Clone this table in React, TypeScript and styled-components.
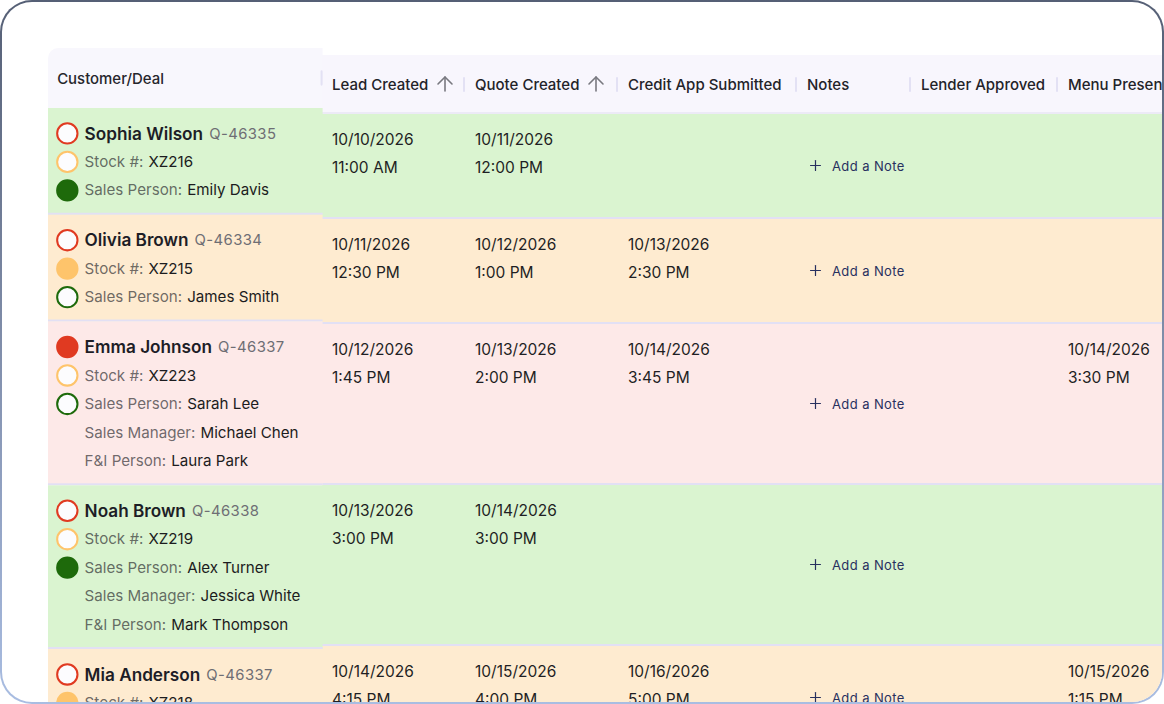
import React from 'react';
import styled, { createGlobalStyle } from 'styled-components';
import { ArrowUp, Plus } from 'lucide-react';

const GlobalStyle = createGlobalStyle`
    html, body {
        margin: 0;
        padding: 0;
        background: #ffffff;
    }
    body {
        font-family: Inter, "Noto Sans", sans-serif;
        -webkit-font-smoothing: antialiased;
    }
`

type Tone = 'green' | 'orange' | 'pink';

const toneBg: Record<Tone, string> = {
    green: '#daf4d0',
    orange: '#feebd0',
    pink: '#fde9e8',
}

const Frame = styled.div`
    box-sizing: border-box;
    width: 1164px;
    height: 704px;
    border: 2px solid transparent;
    border-radius: 32px;
    background:
        linear-gradient(#ffffff, #ffffff) padding-box,
        linear-gradient(180deg, #555f75 0%, #7d8aa6 45%, #a9bde2 100%) border-box;
    overflow: hidden;
    padding: 53px 0 0 46px;
`

const Table = styled.div`
    display: flex;
    align-items: flex-start;
`

const StickyPane = styled.div`
    flex: 0 0 270px;
    margin-right: 4px;
    display: flex;
    flex-direction: column;
    transform: scale(1.017);
    transform-origin: left 412px;
`

const ScrollPane = styled.div`
    flex: 0 0 auto;
    display: flex;
    flex-direction: column;
`

const Divider = styled.span`
    flex: 0 0 2px;
    width: 2px;
    height: 15px;
    margin-left: auto;
    background: #e3e1f4;
    border-radius: 1px;
`

const StickyHead = styled.div`
    box-sizing: border-box;
    height: 59px;
    background: #f8f7fd;
    border-top-left-radius: 10px;
    display: flex;
    align-items: center;
    padding-left: 9px;
    font-size: 14.7px;
    color: #26262c;
    font-weight: 500;
`

const HeadRow = styled.div`
    box-sizing: border-box;
    height: 59px;
    display: flex;
    background: #f8f6fd;
    border-bottom: 2px solid #eceaf6;
    padding-top: 1px;
`

const HeadCell = styled.div<{ $w: number }>`
    box-sizing: border-box;
    width: ${p => p.$w}px;
    flex: 0 0 auto;
    display: flex;
    align-items: center;
    padding-left: 10px;
    font-size: 15px;
    font-weight: 500;
    color: #232329;
    white-space: nowrap;

    & > svg {
        color: #78787f;
        flex: 0 0 auto;
        margin-left: 5px;
    }
`

const Row = styled.div<{ $tone: Tone; $h: number }>`
    box-sizing: border-box;
    height: ${p => p.$h}px;
    background: ${p => toneBg[p.$tone]};
    border-bottom: 2px solid #e2e0f4;
    display: flex;
`

const DealCell = styled.div`
    display: flex;
    flex-direction: column;
    padding: 11px 0 0 8px;
`

const Line = styled.div`
    height: 28px;
    display: flex;
    align-items: center;
    gap: 6px;
    font-size: 14.9px;
    white-space: nowrap;
`

const Dot = styled.span<{ $color: string; $filled?: boolean }>`
    box-sizing: border-box;
    width: 22px;
    height: 22px;
    border-radius: 50%;
    border: 2px solid ${p => p.$color};
    background: ${p => (p.$filled ? p.$color : '#fcfcfe')};
    flex: 0 0 auto;
`

const Spacer = styled.span`
    width: 22px;
    flex: 0 0 auto;
`

const Name = styled.span`
    font-size: 16.9px;
    font-weight: 600;
    color: #1d1d26;
`

const Code = styled.span`
    font-size: 14.6px;
    color: #6e6e74;
    letter-spacing: 0.4px;
`

const Label = styled.span`
    color: rgba(40, 40, 44, 0.68);
    margin-right: 5px;
`

const Value = styled.span`
    color: #1c1c20;
`

const DataCell = styled.div<{ $w: number }>`
    box-sizing: border-box;
    width: ${p => p.$w}px;
    flex: 0 0 auto;
    padding: 12px 10px 0;
    font-size: 15.5px;
    color: #1f1f24;
    line-height: 28px;
    white-space: nowrap;
`

const NoteCell = styled.div<{ $w: number }>`
    box-sizing: border-box;
    width: ${p => p.$w}px;
    flex: 0 0 auto;
    display: flex;
    align-items: center;
    gap: 8px;
    padding-left: 10px;
    font-size: 13px;
    letter-spacing: 0.4px;
    color: #28305f;
    white-space: nowrap;

    & > svg {
        color: #28305f;
        flex: 0 0 auto;
    }
`

const RED = '#e03a21';
const ORANGE = '#fec46b';
const GREEN = '#1e6a0b';

type Stamp = [string, string] | null;

interface Deal {
    name: string;
    code: string;
    stock: string;
    sales: string;
    manager?: string;
    fi?: string;
    tone: Tone;
    dots: [boolean, boolean, boolean];
    lead: Stamp;
    quote: Stamp;
    credit: Stamp;
    lender: Stamp;
    menu: Stamp;
}

const deals: Deal[] = [
    {
        name: 'Sophia Wilson', code: 'Q-46335', stock: 'XZ216', sales: 'Emily Davis',
        tone: 'green', dots: [false, false, true],
        lead: ['10/10/2026', '11:00 AM'], quote: ['10/11/2026', '12:00 PM'],
        credit: null, lender: null, menu: null,
    },
    {
        name: 'Olivia Brown', code: 'Q-46334', stock: 'XZ215', sales: 'James Smith',
        tone: 'orange', dots: [false, true, false],
        lead: ['10/11/2026', '12:30 PM'], quote: ['10/12/2026', '1:00 PM'],
        credit: ['10/13/2026', '2:30 PM'], lender: null, menu: null,
    },
    {
        name: 'Emma Johnson', code: 'Q-46337', stock: 'XZ223', sales: 'Sarah Lee',
        manager: 'Michael Chen', fi: 'Laura Park',
        tone: 'pink', dots: [true, false, false],
        lead: ['10/12/2026', '1:45 PM'], quote: ['10/13/2026', '2:00 PM'],
        credit: ['10/14/2026', '3:45 PM'], lender: null, menu: ['10/14/2026', '3:30 PM'],
    },
    {
        name: 'Noah Brown', code: 'Q-46338', stock: 'XZ219', sales: 'Alex Turner',
        manager: 'Jessica White', fi: 'Mark Thompson',
        tone: 'green', dots: [false, false, true],
        lead: ['10/13/2026', '3:00 PM'], quote: ['10/14/2026', '3:00 PM'],
        credit: null, lender: null, menu: null,
    },
    {
        name: 'Mia Anderson', code: 'Q-46337', stock: 'XZ218', sales: 'Olivia Martin',
        tone: 'orange', dots: [false, true, false],
        lead: ['10/14/2026', '4:15 PM'], quote: ['10/15/2026', '4:00 PM'],
        credit: ['10/16/2026', '5:00 PM'], lender: null, menu: ['10/15/2026', '1:15 PM'],
    },
]

const columns = [
    { key: 'lead', title: 'Lead Created', w: 143, sort: true },
    { key: 'quote', title: 'Quote Created', w: 153, sort: true },
    { key: 'credit', title: 'Credit App Submitted', w: 179, sort: false },
    { key: 'notes', title: 'Notes', w: 114, sort: false },
    { key: 'lender', title: 'Lender Approved', w: 147, sort: false },
    { key: 'menu', title: 'Menu Presented', w: 180, sort: false },
]

const rowHeight = (d: Deal) => (d.manager ? 161 : 105);

const StampCell: React.FC<{ w: number; value: Stamp }> = ({ w, value }) => (
    <DataCell $w={w}>
        {value && (
            <>
                <div>{value[0]}</div>
                <div>{value[1]}</div>
            </>
        )}
    </DataCell>
)

const App: React.FC = () => {
    return (
        <>
            <GlobalStyle />
            <Frame>
                <Table>
                    <StickyPane>
                        <StickyHead>
                            <span>Customer/Deal</span>
                            <Divider />
                        </StickyHead>
                        {deals.map(d => (
                            <Row key={d.name + d.code} $tone={d.tone} $h={rowHeight(d)}>
                                <DealCell>
                                    <Line>
                                        <Dot $color={RED} $filled={d.dots[0]} />
                                        <Name>{d.name}</Name>
                                        <Code>{d.code}</Code>
                                    </Line>
                                    <Line>
                                        <Dot $color={ORANGE} $filled={d.dots[1]} />
                                        <span><Label>Stock #:</Label><Value>{d.stock}</Value></span>
                                    </Line>
                                    <Line>
                                        <Dot $color={GREEN} $filled={d.dots[2]} />
                                        <span><Label>Sales Person:</Label><Value>{d.sales}</Value></span>
                                    </Line>
                                    {d.manager && (
                                        <Line>
                                            <Spacer />
                                            <span><Label>Sales Manager:</Label><Value>{d.manager}</Value></span>
                                        </Line>
                                    )}
                                    {d.fi && (
                                        <Line>
                                            <Spacer />
                                            <span><Label>F&amp;I Person:</Label><Value>{d.fi}</Value></span>
                                        </Line>
                                    )}
                                </DealCell>
                            </Row>
                        ))}
                    </StickyPane>

                    <ScrollPane>
                        <HeadRow>
                            {columns.map(c => (
                                <HeadCell key={c.key} $w={c.w}>
                                    <span>{c.title}</span>
                                    {c.sort && <ArrowUp size={24} strokeWidth={1.6} />}
                                    <Divider />
                                </HeadCell>
                            ))}
                        </HeadRow>
                        {deals.map(d => (
                            <Row key={d.name + d.code} $tone={d.tone} $h={rowHeight(d)}>
                                <StampCell w={143} value={d.lead} />
                                <StampCell w={153} value={d.quote} />
                                <StampCell w={179} value={d.credit} />
                                <NoteCell $w={114}>
                                    <Plus size={17} strokeWidth={1.7} />
                                    <span>Add a Note</span>
                                </NoteCell>
                                <StampCell w={147} value={d.lender} />
                                <StampCell w={180} value={d.menu} />
                            </Row>
                        ))}
                    </ScrollPane>
                </Table>
            </Frame>
        </>
    )
}

export default App;
